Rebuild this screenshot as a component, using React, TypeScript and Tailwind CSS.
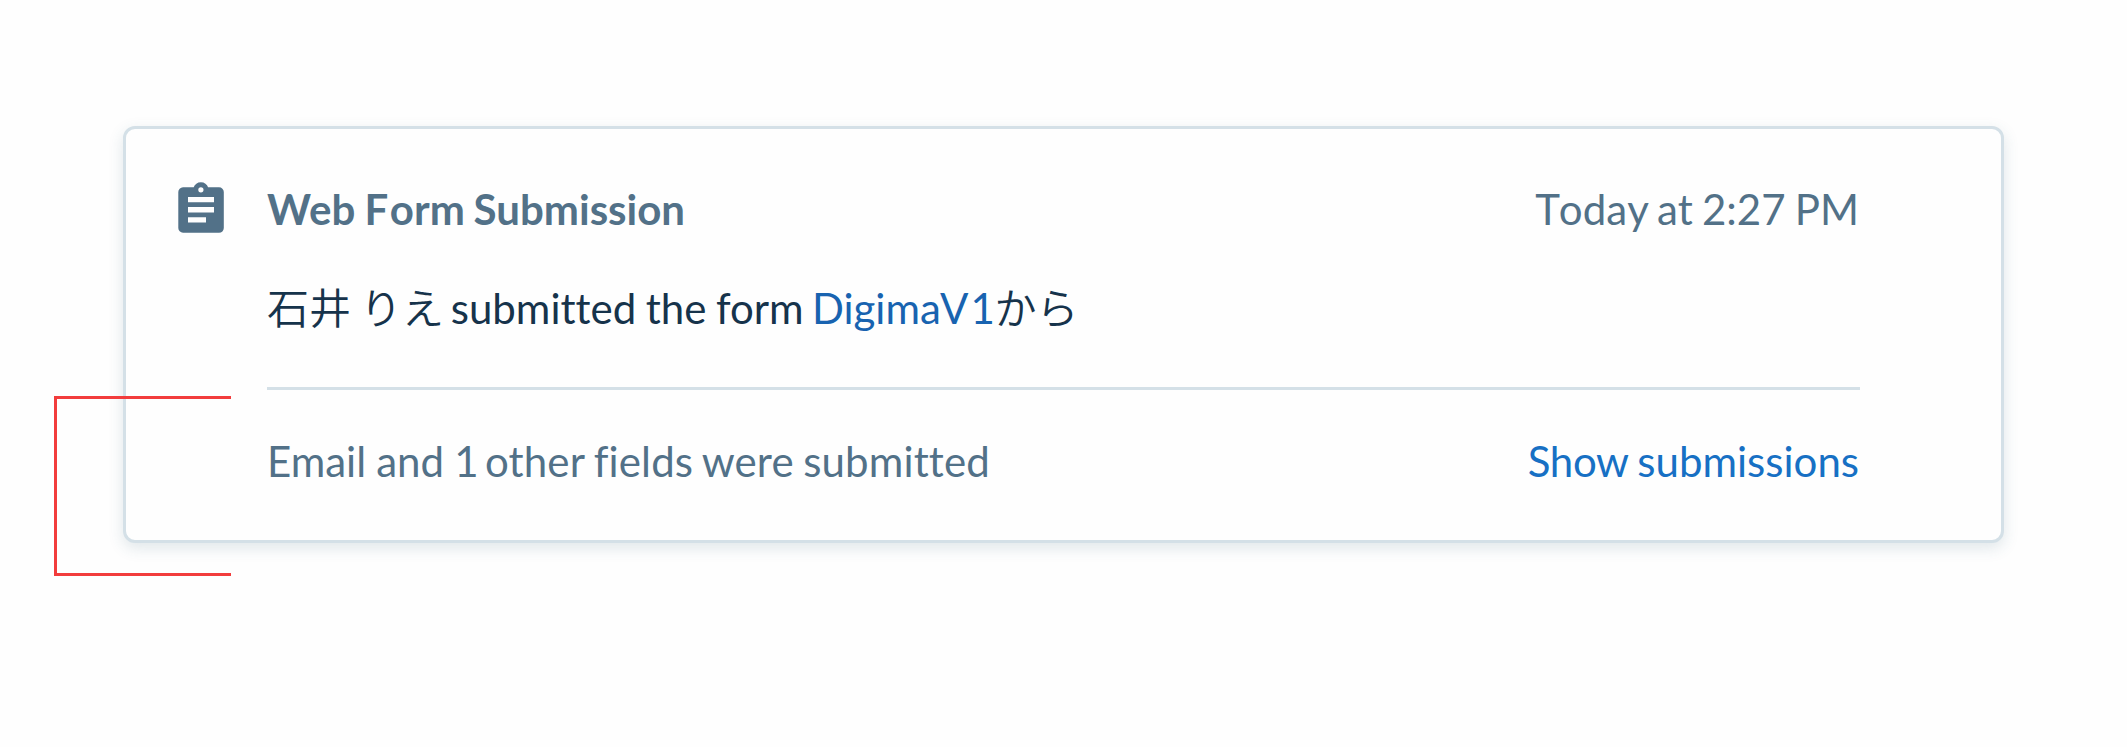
function FormIcon() {
  return (
    <svg width="46" height="51" viewBox="0 0 46 51" className="shrink-0" aria-hidden="true">
      <path
        fill="#527188"
        fillRule="evenodd"
        d="M5 5.3H15.7C16.7 2.3 19.4.3 22.9.3s6.2 2 7.2 5H41a4.8 4.8 0 0 1 4.8 4.8V46a4.8 4.8 0 0 1-4.8 4.8H5A4.8 4.8 0 0 1 .3 46V10.1A4.8 4.8 0 0 1 5 5.3ZM22.9 5.2a2.6 2.6 0 1 0 0 5.2 2.6 2.6 0 0 0 0-5.2ZM10 15v5.3h26V15ZM10 25.1v5.3h26v-5.3ZM10 35.2v5.3h18v-5.3Z"
      />
    </svg>
  );
}

export default function App() {
  return (
    <div className="relative h-[747px] w-[2127px] overflow-hidden bg-[#fefefe] px-[123px] pt-[126px] font-['Lato','Noto_Sans_CJK_JP',sans-serif] text-[42px] leading-[60px] whitespace-nowrap [font-variant-ligatures:none]">
      <article className="flex h-[417px] rounded-[12px] border-[3px] border-[#d4e0e7] bg-[#fefefe] pt-[50px] pr-[141px] pl-[52px] shadow-[0_5px_15px_rgba(45,95,115,0.15)]">
        <div className="w-[89px] shrink-0 pt-[3px]">
          <FormIcon />
        </div>
        <div className="flex-1">
          <header className="flex justify-between text-[#527188]">
            <h1 className="font-bold [word-spacing:-1.4px]">
              <span className="tracking-[0.3px]">Web</span> <span className="tracking-[1.5px]">F</span>orm Submission
            </h1>
            <time className="mr-px [word-spacing:-1.5px]">
              <span className="tracking-[-1.2px]">T</span>od<span className="tracking-[0.1px]">a</span>y at 2:27 PM
            </time>
          </header>
          <p className="mt-[39px] h-[60px] text-[#16334b] [word-spacing:-1.2px]">
            <span className="font-[350] [word-spacing:-2.3px]">石井 りえ </span>
            <span className="-ml-[2.5px]">submitted the form</span>
            <span className="[word-spacing:-2.5px]"> </span>
            <a className="text-[#1863b0]">
              Digim<span className="tracking-[2px]">aV</span>1
            </a>
            <span className="-ml-[0.5px] font-[350]">から</span>
          </p>
          <hr className="mt-[49px] border-0 border-t-[3px] border-[#d4e0e7]" />
          <footer className="mt-[41px] flex justify-between text-[#527188]">
            <span>
              <span className="[word-spacing:-0.6px]">Email and 1</span>
              <span className="-ml-[3px] tracking-[0.15px] [word-spacing:-1.5px]"> other fields were submitted</span>
            </span>
            <a className="mr-px text-[#1770c4] [word-spacing:-2.2px]">
              <span className="tracking-[-0.3px]">Show</span> submissions
            </a>
          </footer>
        </div>
      </article>
      <div className="absolute top-[396px] left-[54px] h-[180px] w-[177px] border-y-[3px] border-l-[3px] border-[#f23c3c]" />
    </div>
  );
}
